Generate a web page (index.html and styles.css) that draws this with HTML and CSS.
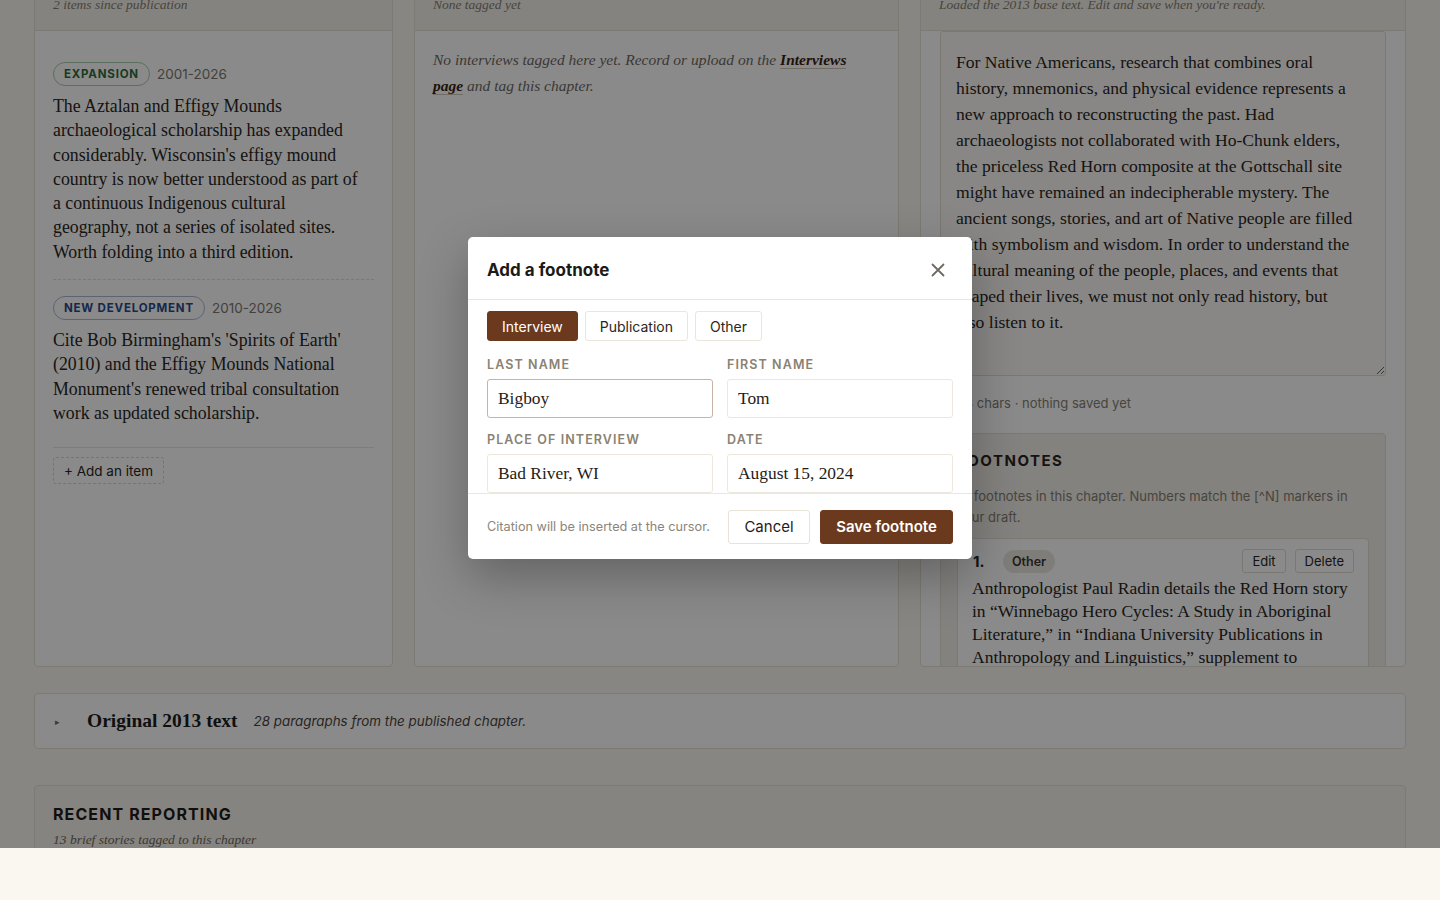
FILE: index.html
```
<!DOCTYPE html>
<html lang="en">
<head>
<meta charset="utf-8">
<title>Chapter editor</title>
<link rel="stylesheet" href="styles.css">
</head>
<body>
<div class="viewport">
  <div class="page">
    <div class="columns">
      <section class="panel">
        <header class="panel-head">
          <h2 class="panel-title">Updated scholarship</h2>
          <p class="panel-sub">2 items since publication</p>
        </header>
        <div class="panel-body">
          <article class="item">
            <div class="item-meta"><span class="badge badge-green">Expansion</span><span class="years">2001-2026</span></div>
            <p class="item-text">The Aztalan and Effigy Mounds archaeological scholarship has expanded considerably. Wisconsin's effigy mound country is now better understood as part of a continuous Indigenous cultural geography, not a series of isolated sites. Worth folding into a third edition.</p>
          </article>
          <article class="item item-last">
            <div class="item-meta"><span class="badge badge-blue">New development</span><span class="years">2010-2026</span></div>
            <p class="item-text">Cite Bob Birmingham's 'Spirits of Earth' (2010) and the Effigy Mounds National Monument's renewed tribal consultation work as updated scholarship.</p>
          </article>
          <div class="add-row"><button class="add-btn" type="button">+ Add an item</button></div>
        </div>
      </section>

      <section class="panel">
        <header class="panel-head">
          <h2 class="panel-title">Interviews</h2>
          <p class="panel-sub">None tagged yet</p>
        </header>
        <div class="panel-body">
          <p class="empty">No interviews tagged here yet. Record or upload on the <a class="link" href="#">Interviews page</a> and tag this chapter.</p>
        </div>
      </section>

      <section class="panel">
        <header class="panel-head">
          <h2 class="panel-title">Your draft</h2>
          <p class="panel-sub">Loaded the 2013 base text. Edit and save when you're ready.</p>
        </header>
        <div class="panel-body panel-body-draft">
          <textarea class="draft" spellcheck="false">For Native Americans, research that combines oral history, mnemonics, and physical evidence represents a new approach to reconstructing the past. Had archaeologists not collaborated with Ho-Chunk elders, the priceless Red Horn composite at the Gottschall site might have remained an indecipherable mystery. The ancient songs, stories, and art of Native people are filled with symbolism and wisdom. In order to understand the cultural meaning of the people, places, and events that shaped their lives, we must not only read history, but also listen to it.</textarea>
          <p class="draft-meta">2,418 chars · nothing saved yet</p>
          <div class="footnotes">
            <h3 class="fn-title">Footnotes</h3>
            <p class="fn-sub">12 footnotes in this chapter. Numbers match the [^N] markers in your draft.</p>
            <div class="fn-card">
              <div class="fn-head">
                <span class="fn-num">1.</span>
                <span class="fn-type">Other</span>
                <span class="fn-actions"><button class="small-btn" type="button">Edit</button><button class="small-btn" type="button">Delete</button></span>
              </div>
              <p class="fn-text">Anthropologist Paul Radin details the Red Horn story in “Winnebago Hero Cycles: A Study in Aboriginal Literature,” in “Indiana University Publications in Anthropology and Linguistics,” supplement to International Journal of American Linguistics 14 (April 1948).</p>
            </div>
          </div>
        </div>
      </section>
    </div>

    <div class="original">
      <span class="caret">▸</span>
      <span class="original-title">Original 2013 text</span>
      <span class="original-sub">28 paragraphs from the published chapter.</span>
    </div>

    <section class="recent">
      <h2 class="recent-title">Recent reporting</h2>
      <p class="recent-sub">13 brief stories tagged to this chapter</p>
    </section>
  </div>

  <div class="overlay">
    <div class="modal" role="dialog" aria-label="Add a footnote">
      <div class="modal-head">
        <h2 class="modal-title">Add a footnote</h2>
        <button class="close" type="button" aria-label="Close">
          <svg width="14" height="14" viewBox="0 0 14 14"><path d="M1.5 1.5 L12.5 12.5 M12.5 1.5 L1.5 12.5" stroke="#6e6a62" stroke-width="1.8" stroke-linecap="round" fill="none"/></svg>
        </button>
      </div>
      <div class="modal-body">
        <div class="tabs">
          <button class="tab tab-active" type="button">Interview</button>
          <button class="tab" type="button">Publication</button>
          <button class="tab" type="button">Other</button>
        </div>
        <div class="fields">
          <label class="field"><span class="label">Last name</span><input class="input input-focus" value="Bigboy"></label>
          <label class="field"><span class="label">First name</span><input class="input" value="Tom"></label>
          <label class="field"><span class="label">Place of interview</span><input class="input" value="Bad River, WI"></label>
          <label class="field"><span class="label">Date</span><input class="input" value="August 15, 2024"></label>
          <label class="field field-wide"><span class="label">Notes</span><input class="input" value=""></label>
        </div>
      </div>
      <div class="modal-foot">
        <span class="foot-note">Citation will be inserted at the cursor.</span>
        <span class="foot-actions">
          <button class="btn btn-ghost" type="button">Cancel</button>
          <button class="btn btn-primary" type="button">Save footnote</button>
        </span>
      </div>
    </div>
  </div>
</div>
</body>
</html>
```

FILE: styles.css
```
* { box-sizing: border-box; }

html, body {
  margin: 0;
  padding: 0;
  background: #faf7f0;
  color: #2a2622;
  font-family: Inter, "Noto Sans", sans-serif;
}

.viewport {
  position: relative;
  height: 848px;
  overflow: hidden;
}

.page {
  margin-top: -40px;
  padding: 0 34px;
}

.columns {
  display: grid;
  grid-template-columns: 359fr 485fr 486fr;
  gap: 21px;
}

.panel {
  height: 707px;
  overflow: hidden;
  background: #ffffff;
  border: 1px solid #e7e1d5;
  border-radius: 4px;
  display: flex;
  flex-direction: column;
}

.panel-head {
  height: 70px;
  flex: none;
  background: #f6f2ea;
  border-bottom: 1px solid #e7e1d5;
  padding: 0 18px 16px;
  display: flex;
  flex-direction: column;
  justify-content: flex-end;
}

.panel-title {
  margin: 0 0 4px;
  font-size: 15px;
  font-weight: 700;
  letter-spacing: 1px;
  text-transform: uppercase;
  line-height: 20px;
}

.panel-sub {
  margin: 0;
  font-family: "Liberation Serif", serif;
  font-style: italic;
  font-size: 13.5px;
  line-height: 18px;
  color: #857f74;
  white-space: nowrap;
}

.panel-body {
  padding: 15px 18px 18px;
}

.item {
  padding: 16px 0 15px;
  border-bottom: 1px dashed #e3ddd1;
}

.item-last {
  border-bottom: none;
}

.item-meta {
  display: flex;
  align-items: center;
  gap: 7px;
  margin-bottom: 8px;
}

.badge {
  display: inline-flex;
  align-items: center;
  height: 24px;
  padding: 0 10px;
  border-radius: 12px;
  font-size: 11.5px;
  font-weight: 700;
  letter-spacing: 0.8px;
  text-transform: uppercase;
}

.badge-green {
  color: #2e6e3c;
  border: 1px solid #a9c9ae;
}

.badge-blue {
  color: #2a4a8e;
  border: 1px solid #a8b8d8;
}

.years {
  font-size: 13.5px;
  color: #7d786e;
}

.item-text {
  margin: 0;
  max-width: 312px;
  font-family: "Liberation Serif", serif;
  font-size: 17.8px;
  line-height: 24.3px;
  color: #2a2622;
}

.add-row {
  margin-top: 7px;
  border-top: 1px solid #ece7dd;
  padding-top: 9px;
}

.add-btn {
  height: 27px;
  padding: 0 10px;
  background: #ffffff;
  border: 1px dashed #dcd6ca;
  border-radius: 3px;
  font-family: Inter, sans-serif;
  font-size: 13.5px;
  color: #2a2622;
}

.empty {
  margin: 1px 0 0;
  font-family: "Liberation Serif", serif;
  font-style: italic;
  font-size: 15.5px;
  line-height: 26px;
  color: #6f695f;
}

.link {
  color: #3b1f10;
  font-weight: 700;
  text-decoration: none;
  border-bottom: 1px solid #cfc6b8;
}

.panel-body-draft {
  padding: 0 19px 18px;
}

.draft {
  display: block;
  width: 100%;
  height: 345px;
  margin: 0;
  padding: 17px 29px 17px 15px;
  resize: vertical;
  background: #fcfaf6;
  border: 1px solid #e3ddd1;
  border-radius: 3px;
  font-family: "Liberation Serif", serif;
  font-size: 17.6px;
  line-height: 26px;
  color: #2a2622;
  overflow: hidden;
}

.draft-meta {
  margin: 18px 0 21px;
  font-size: 13px;
  line-height: 18px;
  color: #857f74;
}

.footnotes {
  background: #f3f0ea;
  border: 1px solid #e6e0d3;
  border-radius: 4px;
  padding: 17px 16px 20px;
}

.fn-title {
  margin: 0;
  font-size: 15px;
  font-weight: 700;
  letter-spacing: 1.5px;
  text-transform: uppercase;
  line-height: 20px;
}

.fn-sub {
  margin: 15px 0 10px;
  font-size: 13px;
  line-height: 21px;
  color: #857f74;
}

.fn-card {
  background: #ffffff;
  border: 1px solid #e6e0d3;
  border-radius: 4px;
  padding: 10px 14px 14px;
}

.fn-head {
  display: flex;
  align-items: center;
  height: 24px;
}

.fn-num {
  font-size: 15px;
  font-weight: 700;
  width: 31px;
  padding-left: 1px;
}

.fn-type {
  display: inline-flex;
  align-items: center;
  height: 23px;
  padding: 0 9px;
  border-radius: 12px;
  background: #ebe8e2;
  font-size: 12.5px;
  font-weight: 600;
  color: #3a3630;
}

.fn-actions {
  margin-left: auto;
  display: flex;
  gap: 9px;
}

.small-btn {
  height: 24px;
  padding: 0 9px;
  background: #ffffff;
  border: 1px solid #e3ddd1;
  border-radius: 3px;
  font-family: Inter, sans-serif;
  font-size: 13px;
  color: #2a2622;
}

.fn-text {
  margin: 4px 0 0;
  font-family: "Liberation Serif", serif;
  font-size: 17.5px;
  line-height: 23px;
  color: #2a2622;
}

.original {
  margin-top: 26px;
  height: 56px;
  background: #ffffff;
  border: 1px solid #e7e1d5;
  border-radius: 4px;
  display: flex;
  align-items: center;
  padding: 0 20px;
}

.caret {
  font-size: 9px;
  color: #6f695f;
  width: 32px;
}

.original-title {
  font-family: "Liberation Serif", serif;
  font-size: 19.5px;
  font-weight: 700;
  color: #1f1c19;
  margin-right: 16px;
}

.original-sub {
  font-size: 13.4px;
  font-style: italic;
  color: #4a453e;
}

.recent {
  margin-top: 36px;
  background: #f8f4ec;
  border: 1px solid #e7e1d5;
  border-radius: 4px;
  padding: 18px 18px 30px;
  height: 200px;
}

.recent-title {
  margin: 0;
  font-size: 16px;
  font-weight: 700;
  letter-spacing: 1.1px;
  text-transform: uppercase;
  line-height: 20px;
  color: #1f1c19;
}

.recent-sub {
  margin: 7px 0 0;
  font-family: "Liberation Serif", serif;
  font-style: italic;
  font-size: 13.5px;
  line-height: 18px;
  color: #6f695f;
}

/* overlay + modal */
.overlay {
  position: absolute;
  inset: 0;
  background: rgba(0, 0, 0, 0.46);
  display: flex;
  justify-content: center;
  align-items: flex-start;
  padding-top: 237px;
}

.modal {
  width: 504px;
  background: #ffffff;
  border-radius: 5px;
  box-shadow: 0 18px 48px rgba(0, 0, 0, 0.28);
  overflow: hidden;
}

.modal-head {
  height: 63px;
  border-bottom: 1px solid #ece7dd;
  display: flex;
  align-items: center;
  justify-content: space-between;
  padding: 3px 19px 0;
}

.modal-title {
  margin: 0;
  font-size: 17px;
  font-weight: 700;
  color: #1c1a17;
}

.close {
  border: none;
  background: none;
  padding: 0;
  margin-right: 8px;
  width: 14px;
  height: 14px;
  display: flex;
}

.modal-body {
  height: 193px;
  overflow: hidden;
  padding: 11px 19px;
}

.tabs {
  display: flex;
  gap: 7px;
}

.tab {
  height: 30px;
  padding: 0 14px;
  background: #ffffff;
  border: 1px solid #ebe6dc;
  border-radius: 3px;
  font-family: Inter, sans-serif;
  font-size: 14px;
  color: #2a2622;
}

.tab-active {
  background: #6b3a1e;
  border-color: #6b3a1e;
  color: #ffffff;
}

.fields {
  display: grid;
  grid-template-columns: 1fr 1fr;
  column-gap: 14px;
  row-gap: 14px;
  margin-top: 16px;
}

.field {
  display: flex;
  flex-direction: column;
  gap: 6px;
}

.field-wide {
  grid-column: 1 / -1;
}

.label {
  font-size: 12.5px;
  font-weight: 600;
  letter-spacing: 1.1px;
  text-transform: uppercase;
  line-height: 16px;
  color: #8a8272;
}

.input {
  height: 39px;
  width: 100%;
  padding: 0 10px;
  border: 1px solid #ede8de;
  border-radius: 3px;
  background: #ffffff;
  font-family: "Liberation Serif", serif;
  font-size: 17.4px;
  color: #1f1c19;
  outline: none;
}

.input-focus {
  border-color: #c9b3a6;
}

.modal-foot {
  height: 66px;
  border-top: 1px solid #ece7dd;
  display: flex;
  align-items: center;
  justify-content: space-between;
  padding: 0 19px;
}

.foot-note {
  font-size: 12.7px;
  color: #8a857b;
}

.foot-actions {
  display: flex;
  gap: 10px;
}

.btn {
  height: 34px;
  border-radius: 3px;
  font-family: Inter, sans-serif;
  font-size: 15px;
}

.btn-ghost {
  width: 82px;
  background: #ffffff;
  border: 1px solid #e8e3d8;
  color: #1f1c19;
}

.btn-primary {
  width: 133px;
  background: #6b3a1e;
  border: 1px solid #6b3a1e;
  color: #ffffff;
  font-weight: 600;
}
```
